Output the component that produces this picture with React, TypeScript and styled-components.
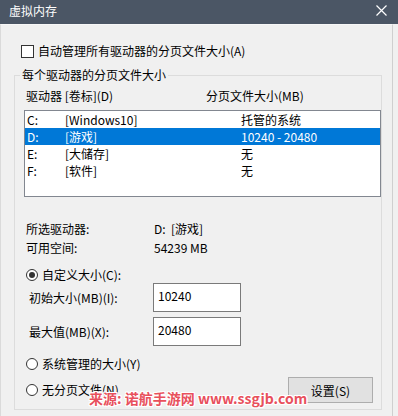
import React from 'react';
import styled, { createGlobalStyle } from 'styled-components';

const GlobalStyle = createGlobalStyle`
  html, body {
    margin: 0;
    padding: 0;
    background: #f0f0f0;
  }
  body {
    font-family: "Noto Sans CJK SC", "Noto Sans", sans-serif;
    font-size: 12px;
    color: #000;
  }
`;

const Window = styled.div`
  position: relative;
  width: 398px;
  height: 416px;
  display: flex;
  flex-direction: column;
  overflow: hidden;
`;

const TitleBar = styled.div`
  flex: none;
  height: 24px;
  box-sizing: border-box;
  padding: 0 11px 2px 9px;
  background: #4b5665;
  color: #fff;
  display: flex;
  align-items: center;
  justify-content: space-between;
  font-size: 12px;
  line-height: 16px;
`;

const CloseButton = styled.svg`
  width: 11px;
  height: 11px;
  margin-bottom: 2px;
`;

const Body = styled.div`
  flex: 1;
  display: flex;
  flex-direction: column;
  margin-right: 5px;
  border-left: 1px solid #dadada;
  border-right: 1px solid #cfcfcf;
  border-top: 1px solid #f7f7f7;
  padding-top: 18px;
`;

const CheckRow = styled.label`
  display: flex;
  align-items: center;
  gap: 4px;
  height: 16px;
  line-height: 16px;
  margin-left: 20px;
`;

const CheckBox = styled.span`
  width: 13px;
  height: 13px;
  box-sizing: border-box;
  border: 1px solid #333;
  background: #fff;
`;

/* group box with the etched Windows frame */
const Group = styled.fieldset`
  margin: 8px 0 0 13px;
  width: 368px;
  box-sizing: border-box;
  border: 1px solid #dcdcdc;
  padding: 0 0 6px 9px;
  min-width: 0;
`;

const Legend = styled.legend`
  margin-left: -4px;
  padding: 0 2px;
  line-height: 16px;
  font-size: 12px;
`;

const ColumnHeader = styled.div`
  display: grid;
  grid-template-columns: 180px 1fr;
  margin-top: 5px;
  padding-left: 2px;
  line-height: 16px;
`;

const ListBox = styled.div`
  margin-top: 6px;
  height: 87px;
  box-sizing: border-box;
  border: 1px solid #828790;
  background: #fff;
`;

const DriveRow = styled.div<{ $selected?: boolean }>`
  display: grid;
  grid-template-columns: 38px 176px 1fr;
  height: 17px;
  line-height: 17px;
  padding-left: 2px;
  background: ${(p) => (p.$selected ? '#0078d7' : 'transparent')};
  color: ${(p) => (p.$selected ? '#fff' : '#000')};
`;

const InfoList = styled.div`
  margin-top: 24px;
  display: flex;
  flex-direction: column;
  gap: 3px;
`;

const InfoRow = styled.div`
  display: grid;
  grid-template-columns: 128px 1fr;
  padding-left: 2px;
  line-height: 16px;
`;

const RadioRow = styled.label<{ $gap?: number }>`
  display: flex;
  align-items: center;
  gap: 4px;
  padding-left: 2px;
  line-height: 16px;
  margin-top: ${(p) => p.$gap ?? 0}px;
`;

const Radio = styled.span<{ $checked?: boolean }>`
  width: 12px;
  height: 12px;
  box-sizing: border-box;
  border: 1px solid #333;
  border-radius: 50%;
  background: #fff;
  display: flex;
  align-items: center;
  justify-content: center;

  &::after {
    content: '';
    display: ${(p) => (p.$checked ? 'block' : 'none')};
    width: 6px;
    height: 6px;
    border-radius: 50%;
    background: #333;
  }
`;

const FieldRow = styled.div<{ $gap?: number }>`
  display: grid;
  grid-template-columns: 124px 88px;
  align-items: center;
  padding-left: 5px;
  margin-top: ${(p) => p.$gap ?? 0}px;
  line-height: 16px;
`;

const SizeInput = styled.input`
  width: 88px;
  height: 29px;
  box-sizing: border-box;
  border: 1px solid #7a7a7a;
  background: #fff;
  padding: 3px 4px 8px;
  margin: 0;
  font-family: inherit;
  font-size: 12px;
  line-height: 16px;
  color: #000;
  outline: none;
`;

const BottomRow = styled.div`
  display: flex;
  align-items: center;
  justify-content: space-between;
  margin-top: 5px;
  padding-right: 8px;
`;

const Button = styled.button`
  width: 85px;
  height: 26px;
  box-sizing: border-box;
  border: 1px solid #adadad;
  background: #e1e1e1;
  font-family: inherit;
  font-size: 12px;
  color: #000;
  padding: 0;
`;

const Watermark = styled.div`
  position: absolute;
  left: 89px;
  top: 388px;
  font-family: "Noto Sans CJK SC", sans-serif;
  font-weight: 700;
  font-size: 14px;
  line-height: 20px;
  color: #e8505c;
  white-space: nowrap;
  text-shadow: 1px 0 0 #fff, -1px 0 0 #fff, 0 1px 0 #fff, 0 -1px 0 #fff,
    1px 1px 0 #fff, -1px -1px 0 #fff, 1px -1px 0 #fff, -1px 1px 0 #fff;
`;

const drives = [
  { letter: 'C:', label: '[Windows10]', size: '托管的系统' },
  { letter: 'D:', label: '[游戏]', size: '10240 - 20480', selected: true },
  { letter: 'E:', label: '[大储存]', size: '无' },
  { letter: 'F:', label: '[软件]', size: '无' },
];

export default function App() {
  return (
    <Window>
      <GlobalStyle />
      <TitleBar>
        <span>虚拟内存</span>
        <CloseButton viewBox="0 0 11 11">
          <path d="M0.5 0.5 L10.5 10.5 M10.5 0.5 L0.5 10.5" stroke="#fff" strokeWidth="1.2" fill="none" />
        </CloseButton>
      </TitleBar>
      <Body>
        <CheckRow>
          <CheckBox />
          自动管理所有驱动器的分页文件大小(A)
        </CheckRow>
        <Group>
          <Legend>每个驱动器的分页文件大小</Legend>
          <ColumnHeader>
            <span>驱动器 [卷标](D)</span>
            <span>分页文件大小(MB)</span>
          </ColumnHeader>
          <ListBox>
            {drives.map((d) => (
              <DriveRow key={d.letter} $selected={d.selected}>
                <span>{d.letter}</span>
                <span>{d.label}</span>
                <span>{d.size}</span>
              </DriveRow>
            ))}
          </ListBox>
          <InfoList>
            <InfoRow>
              <span>所选驱动器:</span>
              <span>D:&nbsp;&nbsp;[游戏]</span>
            </InfoRow>
            <InfoRow>
              <span>可用空间:</span>
              <span>54239 MB</span>
            </InfoRow>
          </InfoList>
          <RadioRow $gap={11}>
            <Radio $checked />
            自定义大小(C):
          </RadioRow>
          <FieldRow>
            <span>初始大小(MB)(I):</span>
            <SizeInput readOnly defaultValue="10240" />
          </FieldRow>
          <FieldRow $gap={5}>
            <span>最大值(MB)(X):</span>
            <SizeInput readOnly defaultValue="20480" />
          </FieldRow>
          <RadioRow $gap={10}>
            <Radio />
            系统管理的大小(Y)
          </RadioRow>
          <BottomRow>
            <RadioRow>
              <Radio />
              无分页文件(N)
            </RadioRow>
            <Button>设置(S)</Button>
          </BottomRow>
        </Group>
      </Body>
      <Watermark>来源: 诺航手游网 www.ssgjb.com</Watermark>
    </Window>
  );
}
